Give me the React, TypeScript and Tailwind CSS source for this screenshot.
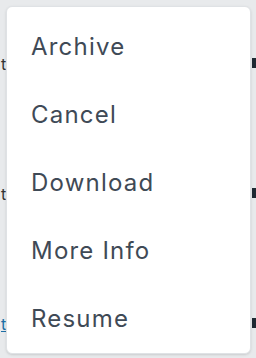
import React from "react";

const items = ["Archive", "Cancel", "Download", "More Info", "Resume"];

export default function App() {
  return (
    <div className="relative w-[256px] h-[358px] overflow-hidden bg-[#e8eaec]" style={{ fontFamily: "Inter, 'Noto Sans', sans-serif" }}>
      {/* underlying content */}
      <div className="flex flex-col w-full h-full">
        <div className="h-[6px] bg-[#f1f2f3]" />
        <div className="flex-1 flex flex-col">
          {[0, 1, 2].map((i) => (
            <div key={i} className="h-[130px] flex items-start justify-between pt-[56px]">
              <span className={`text-[16px] leading-none pl-[1px] ${i === 2 ? "text-[#1d6fa5] underline" : "text-[#333]"}`}>t</span>
              <span className="w-[4px] h-[10px] mt-[2px] bg-[#1f2a33]" />
            </div>
          ))}
        </div>
      </div>
      {/* menu */}
      <div className="absolute left-[6px] top-[6px] w-[245px] h-[348px] bg-white rounded-[6px] border border-[#dfe2e5] shadow-sm py-[6px]">
        {items.map((t) => (
          <div key={t} className="h-[68px] flex items-center pl-[24px] text-[24px] text-[#3f4a56] tracking-[1.2px]">
            {t}
          </div>
        ))}
      </div>
    </div>
  );
}
